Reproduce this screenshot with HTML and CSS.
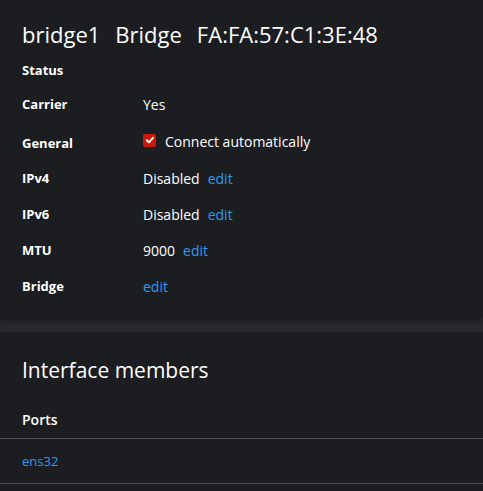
FILE: index.html
```html
<!DOCTYPE html>
<html>
<head>
<meta charset="utf-8">
<link rel="stylesheet" href="styles.css">
</head>
<body>
<section class="card card-main">
  <h1 class="title"><span>bridge1</span><span>Bridge</span><span>FA:FA:57:C1:3E:48</span></h1>
  <dl class="details">
    <dt class="row-status">Status</dt><dd class="row-status"></dd>
    <dt>Carrier</dt><dd>Yes</dd>
    <dt class="row-general">General</dt>
    <dd class="row-general"><label class="check"><span class="box"><svg viewBox="0 0 12 12" width="10" height="10"><path d="M2.2 6.3 L4.8 8.8 L9.8 3.2" fill="none" stroke="#fff" stroke-width="2.2" stroke-linecap="round" stroke-linejoin="round"/></svg></span>Connect automatically</label></dd>
    <dt>IPv4</dt><dd>Disabled <a class="link">edit</a></dd>
    <dt>IPv6</dt><dd>Disabled <a class="link">edit</a></dd>
    <dt>MTU</dt><dd>9000 <a class="link">edit</a></dd>
    <dt>Bridge</dt><dd><a class="link">edit</a></dd>
  </dl>
</section>
<section class="card card-members">
  <h2 class="subtitle">Interface members</h2>
  <table class="ports">
    <thead><tr><th>Ports</th></tr></thead>
    <tbody><tr><td><a class="link">ens32</a></td></tr></tbody>
  </table>
</section>
</body>
</html>
```
FILE: styles.css
```css
html, body {
  margin: 0;
  padding: 0;
  background: #26292d;
  font-family: "Open Sans", "Liberation Sans", sans-serif;
  color: #ffffff;
}
.card {
  background: #1b1d21;
}
.card-main {
  padding: 18px 22px 20px;
  box-shadow: 0 3px 5px rgba(0,0,0,0.35);
}
.title {
  margin: 0;
  font-size: 22px;
  font-weight: 500;
  line-height: 32px;
  display: flex;
  gap: 15px;
}
.details {
  margin: 10px 0 0;
  display: grid;
  grid-template-columns: 121px 1fr;
  grid-template-rows: 20px 24px 26px 24px 24px 24px 24px;
  row-gap: 12px;
  font-size: 14px;
}
.details dt {
  font-weight: 700;
  font-size: 13px;
  display: flex;
  align-items: center;
}
.details dd {
  margin: 0;
  display: flex;
  align-items: center;
  gap: 8px;
}
.details dt.row-general { padding-top: 4px; }
.link {
  color: #2b9af3;
  text-decoration: none;
}
.check {
  display: flex;
  align-items: center;
  gap: 9px;
}
.box {
  width: 13px;
  height: 13px;
  background: #c9190b;
  border-radius: 2px;
  display: flex;
  align-items: center;
  justify-content: center;
  margin-top: -2px;
}
.box svg { display: block; }
.card-members {
  margin-top: 14px;
  padding-top: 24px;
  box-sizing: border-box;
  height: 159px;
}
.subtitle {
  margin: 0 0 17px 22px;
  font-size: 21px;
  font-weight: 500;
  line-height: 28px;
}
.ports {
  width: 100%;
  border-collapse: collapse;
  font-size: 13px;
}
.ports th {
  text-align: left;
  font-weight: 600;
  font-size: 14px;
  height: 37px;
  padding: 0 22px;
  border-bottom: 1px solid #4f5255;
}
.ports td {
  height: 44px;
  padding: 0 22px;
  border-bottom: 1px solid #4f5255;
}
```
